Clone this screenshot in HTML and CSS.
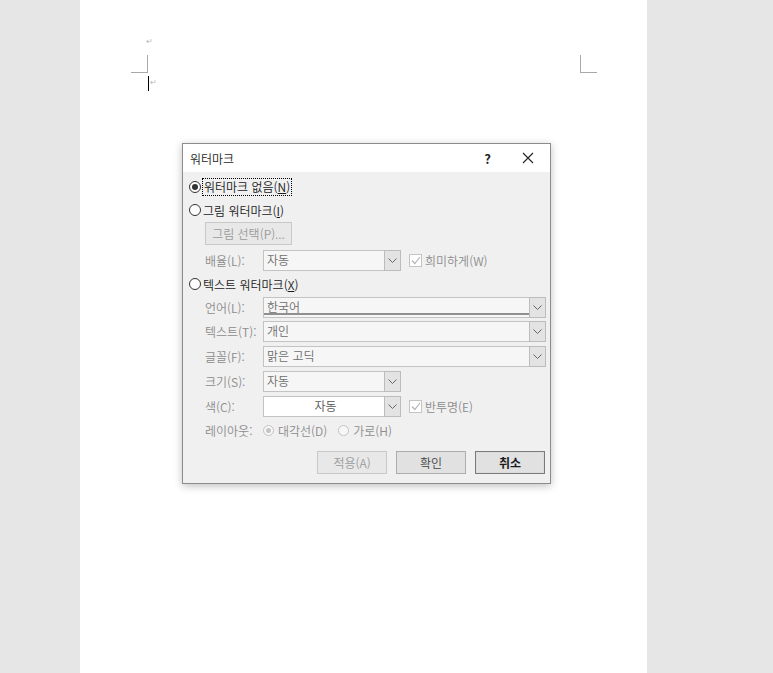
FILE: index.html
```html
<!DOCTYPE html>
<html lang="ko">
<head>
    <meta charset="UTF-8">
    <meta name="viewport" content="width=device-width, initial-scale=1.0">
    <title>워터마크</title>
    <link rel="stylesheet" href="styles.css">
</head>
<body>
    <div class="page">
        <span class="para-mark mark-top">↵</span>
        <span class="corner corner-left"></span>
        <span class="corner corner-right"></span>
        <span class="caret"></span>
        <span class="para-mark mark-caret">↵</span>
    </div>

    <div class="dialog">
        <div class="titlebar">
            <span class="title">워터마크</span>
            <span class="help">?</span>
            <svg class="close" width="12" height="12" viewBox="0 0 12 12">
                <path d="M1 1 L11 11 M11 1 L1 11" stroke="#222" stroke-width="1.1" fill="none"/>
            </svg>
        </div>

        <div class="body">
            <label class="radio-row r-none">
                <span class="radio checked"></span>
                <span class="focus-text">워터마크 없음(<u>N</u>)</span>
            </label>

            <label class="radio-row r-picture">
                <span class="radio"></span>
                <span>그림 워터마크(<u>I</u>)</span>
            </label>

            <div class="indent row-btn">
                <button class="btn btn-pick" disabled>그림 선택(P)...</button>
            </div>

            <div class="field-row row-scale">
                <span class="label">배율(L):</span>
                <div class="select short">
                    <span class="value">자동</span>
                    <span class="drop"><svg width="9" height="5" viewBox="0 0 9 5"><path d="M0.5 0.5 L4.5 4.5 L8.5 0.5" stroke="#666" fill="none"/></svg></span>
                </div>
                <span class="check"><svg width="10" height="9" viewBox="0 0 10 9"><path d="M1 4.5 L3.8 7.5 L9 1" stroke="#b4b4b4" stroke-width="1.2" fill="none"/></svg></span>
                <span class="check-label">희미하게(W)</span>
            </div>

            <label class="radio-row r-text">
                <span class="radio"></span>
                <span>텍스트 워터마크(<u>X</u>)</span>
            </label>

            <div class="field-row row-lang">
                <span class="label">언어(L):</span>
                <div class="select wide lang">
                    <span class="value">한국어</span>
                    <span class="drop"><svg width="9" height="5" viewBox="0 0 9 5"><path d="M0.5 0.5 L4.5 4.5 L8.5 0.5" stroke="#666" fill="none"/></svg></span>
                </div>
            </div>

            <div class="field-row row-text">
                <span class="label">텍스트(T):</span>
                <div class="select wide">
                    <span class="value">개인</span>
                    <span class="drop"><svg width="9" height="5" viewBox="0 0 9 5"><path d="M0.5 0.5 L4.5 4.5 L8.5 0.5" stroke="#666" fill="none"/></svg></span>
                </div>
            </div>

            <div class="field-row row-font">
                <span class="label">글꼴(F):</span>
                <div class="select wide">
                    <span class="value">맑은 고딕</span>
                    <span class="drop"><svg width="9" height="5" viewBox="0 0 9 5"><path d="M0.5 0.5 L4.5 4.5 L8.5 0.5" stroke="#666" fill="none"/></svg></span>
                </div>
            </div>

            <div class="field-row row-size">
                <span class="label">크기(S):</span>
                <div class="select short">
                    <span class="value">자동</span>
                    <span class="drop"><svg width="9" height="5" viewBox="0 0 9 5"><path d="M0.5 0.5 L4.5 4.5 L8.5 0.5" stroke="#666" fill="none"/></svg></span>
                </div>
            </div>

            <div class="field-row row-color">
                <span class="label">색(C):</span>
                <div class="select short color">
                    <span class="value">자동</span>
                    <span class="drop"><svg width="9" height="5" viewBox="0 0 9 5"><path d="M0.5 0.5 L4.5 4.5 L8.5 0.5" stroke="#666" fill="none"/></svg></span>
                </div>
                <span class="check"><svg width="10" height="9" viewBox="0 0 10 9"><path d="M1 4.5 L3.8 7.5 L9 1" stroke="#b4b4b4" stroke-width="1.2" fill="none"/></svg></span>
                <span class="check-label">반투명(E)</span>
            </div>

            <div class="field-row row-layout">
                <span class="label">레이아웃:</span>
                <span class="radio small-radio checked off"></span>
                <span class="opt-label">대각선(D)</span>
                <span class="radio small-radio off second"></span>
                <span class="opt-label">가로(H)</span>
            </div>

            <div class="actions">
                <button class="btn" disabled>적용(A)</button>
                <button class="btn">확인</button>
                <button class="btn default">취소</button>
            </div>
        </div>
    </div>
</body>
</html>
```

FILE: styles.css
```css
html, body {
    margin: 0;
    padding: 0;
}
body {
    background-color: #e6e6e6;
    font-family: "Noto Sans CJK KR", "Noto Sans", sans-serif;
    font-size: 12px;
    font-weight: 350;
    color: #1e1e1e;
    height: 673px;
    overflow: hidden;
}
.page {
    position: relative;
    margin-left: 80px;
    width: 567px;
    height: 673px;
    background-color: #fff;
}
.para-mark {
    position: absolute;
    font-size: 8px;
    color: #b8b8b8;
    line-height: 8px;
}
.mark-top {
    left: 66px;
    top: 37px;
}
.mark-caret {
    left: 70px;
    top: 78px;
}
.corner {
    position: absolute;
    width: 16px;
    height: 17px;
}
.corner-left {
    left: 51px;
    top: 55px;
    border-right: 1px solid #a8a8a8;
    border-bottom: 1px solid #a8a8a8;
}
.corner-right {
    left: 500px;
    top: 55px;
    border-left: 1px solid #a8a8a8;
    border-bottom: 1px solid #a8a8a8;
}
.caret {
    position: absolute;
    left: 68px;
    top: 76px;
    width: 1px;
    height: 15px;
    background-color: #000;
}

/* dialog window */
.dialog {
    position: absolute;
    left: 182px;
    top: 143px;
    width: 367px;
    height: 339px;
    border: 1px solid #8c8c8c;
    background-color: #f0f0f0;
    box-shadow: 0 2px 8px rgba(0, 0, 0, 0.25);
}
.titlebar {
    display: flex;
    align-items: center;
    height: 28px;
    background-color: #fff;
    padding-left: 7px;
}
.title {
    flex: 1;
    margin-top: 1px;
}
.help {
    font-weight: bold;
    font-size: 13px;
    margin-right: 31px;
    margin-top: 1px;
}
.close {
    margin-right: 16px;
}
.body {
    padding: 7px 0 0 6px;
}
.radio-row {
    display: flex;
    align-items: center;
    height: 16px;
    color: #1a1a1a;
}
.radio {
    box-sizing: border-box;
    display: inline-flex;
    align-items: center;
    justify-content: center;
    width: 12px;
    height: 12px;
    border: 1px solid #333;
    border-radius: 50%;
    background-color: #fff;
    margin-right: 2px;
}
.radio.checked::after {
    content: "";
    width: 6px;
    height: 6px;
    border-radius: 50%;
    background-color: #333;
}
.radio.off {
    border-color: #c4c4c4;
    background-color: #f7f7f7;
}
.radio.off.checked::after {
    background-color: #c4c4c4;
}
.focus-text {
    outline: 1px dotted #000;
    outline-offset: 0;
    padding: 0 1px;
    line-height: 16px;
}
.r-picture {
    margin-top: 7px;
}
.r-text {
    margin-top: 5px;
}
.indent {
    padding-left: 16px;
}
.row-btn {
    margin-top: 4px;
}
.btn {
    box-sizing: border-box;
    height: 23px;
    width: 70px;
    font-family: inherit;
    font-size: 12px;
    font-weight: 350;
    color: #444;
    background-color: #e1e1e1;
    border: 1px solid #adadad;
    padding: 0;
}
.btn:disabled {
    color: #9a9a9a;
    background-color: #e8e8e8;
    border-color: #c8c8c8;
}
.btn-pick {
    width: 87px;
}
.btn.default {
    font-weight: bold;
    color: #1a1a1a;
    border-color: #7a7a7a;
    box-shadow: inset 0 0 0 1px #dcdcdc;
}
.field-row {
    display: flex;
    align-items: center;
    padding-left: 16px;
}
.label {
    width: 58px;
    color: #8c8c8c;
    flex-shrink: 0;
}
.select {
    box-sizing: border-box;
    display: flex;
    height: 21px;
    border: 1px solid #c3c3c3;
    background-color: #f6f6f6;
}
.select.short {
    width: 138px;
}
.select.wide {
    width: 283px;
}
.select .value {
    flex: 1;
    padding-left: 3px;
    line-height: 18px;
    color: #6e6e6e;
}
.select.lang .value {
    border-bottom: 2px solid #8f8f8f;
    margin-bottom: 2px;
}
.select.color {
    background-color: #fff;
}
.select.color .value {
    text-align: center;
    color: #555;
}
.drop {
    box-sizing: border-box;
    display: flex;
    align-items: center;
    justify-content: center;
    width: 17px;
    margin: -1px -1px -1px 0;
    border: 1px solid #bcbcbc;
    background-color: #e3e3e3;
}
.check {
    box-sizing: border-box;
    display: inline-flex;
    align-items: center;
    justify-content: center;
    width: 13px;
    height: 13px;
    border: 1px solid #c4c4c4;
    background-color: #fff;
    margin-left: 8px;
    margin-right: 3px;
}
.check-label {
    color: #8c8c8c;
}
.row-scale {
    margin-top: 5px;
}
.row-lang {
    margin-top: 5px;
}
.row-text {
    margin-top: 3px;
}
.row-font,
.row-size,
.row-color {
    margin-top: 4px;
}
.row-layout {
    margin-top: 5px;
    height: 16px;
}
.small-radio {
    width: 11px;
    height: 11px;
    margin-right: 4px;
}
.small-radio.checked::after {
    width: 5px;
    height: 5px;
}
.opt-label {
    color: #8c8c8c;
}
.small-radio.second {
    margin-left: 11px;
}
.actions {
    display: flex;
    justify-content: flex-end;
    gap: 9px;
    margin-top: 13px;
    padding-right: 5px;
}
.actions .btn {
    width: 70px;
}
```
